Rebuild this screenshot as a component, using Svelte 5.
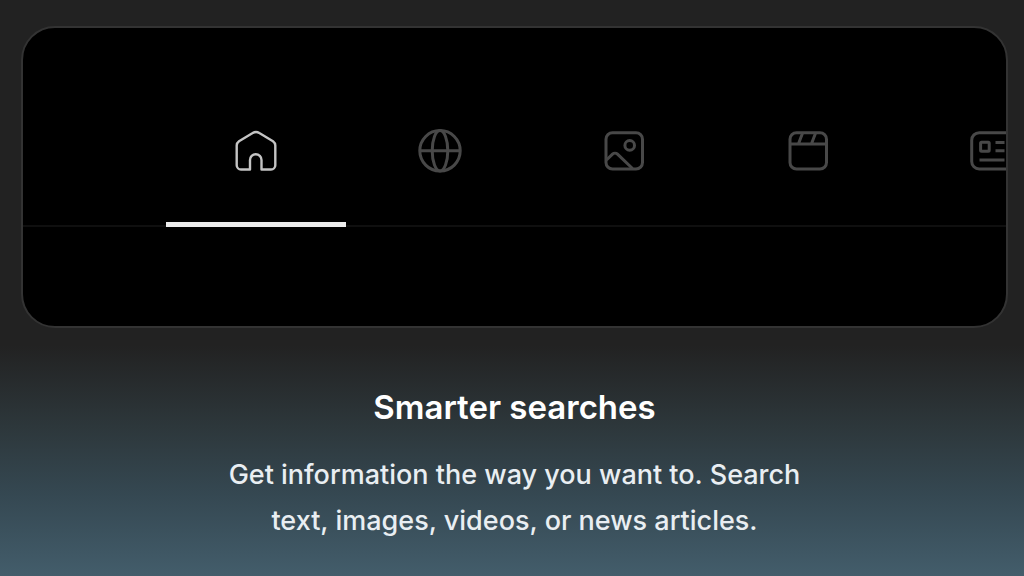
<script>
  let active = $state('home');

  const tabs = [
    { id: 'home', label: 'Home' },
    { id: 'web', label: 'Web' },
    { id: 'images', label: 'Images' },
    { id: 'videos', label: 'Videos' },
    { id: 'news', label: 'News' }
  ];
</script>

<main>
  <section class="card">
    <nav>
      {#each tabs as tab}
        <button
          class:active={active === tab.id}
          aria-label={tab.label}
          onclick={() => (active = tab.id)}
        >
          <svg viewBox="0 0 48 48" aria-hidden="true">
            {#if tab.id === 'home'}
              <path d="M18 42.5H9a4.3 4.3 0 0 1-4.3-4.3V18.6c0-1.8.9-3.4 2.3-4.4L20.7 6a6 6 0 0 1 6.6 0L41 14.2c1.4 1 2.3 2.6 2.3 4.4v19.6a4.3 4.3 0 0 1-4.3 4.3h-9.5V33a5.7 5.7 0 0 0-11.5 0z" />
            {:else if tab.id === 'web'}
              <circle cx="24" cy="23.8" r="20.2" />
              <ellipse cx="24" cy="23.8" rx="7.8" ry="20.2" />
              <path d="M3.8 23.8h40.4" />
            {:else if tab.id === 'images'}
              <rect x="6" y="5.7" width="36.5" height="36.3" rx="6.5" />
              <circle cx="29.7" cy="18.4" r="4.8" />
              <path d="M6.5 33l6-5.8a3.6 3.6 0 0 1 5 0L32.5 41.5" />
            {:else if tab.id === 'videos'}
              <rect x="6" y="5.7" width="36.5" height="36.3" rx="6.5" />
              <path d="M6 17h36.5M18.4 6.5L14.6 16.5M31.4 6.5L27.6 16.5" />
            {:else}
              <rect x="3.7" y="5.7" width="40.6" height="36.3" rx="7.5" />
              <rect x="12.6" y="15.2" width="8.6" height="9" rx="1" />
              <path d="M27.5 15.4h9M27.5 23.8h9M11.5 33h25" />
            {/if}
          </svg>
        </button>
      {/each}
    </nav>
  </section>

  <section class="copy">
    <h2>Smarter searches</h2>
    <p>Get information the way you want to. Search text, images, videos, or news articles.</p>
  </section>
</main>

<style>
  :global(body) {
    background: #222;
  }

  main {
    box-sizing: border-box;
    min-height: 100vh;
    padding: 26px 16px 32px 21px;
    border-bottom: 1px solid #84939b;
    background: linear-gradient(#222 0%, #222 60%, #2d373b 74%, #354852 86%, #435d6b 100%);
    font-family: Inter, 'Liberation Sans', sans-serif;
  }

  .card {
    box-sizing: border-box;
    padding: 51px 0 99px;
    border: 2px solid #333;
    border-radius: 34px;
    background: #000;
    overflow: hidden;
  }

  nav {
    display: flex;
    gap: 4px;
    padding-left: 143px;
    height: 148px;
    background: linear-gradient(#0f0f0f, #0f0f0f) 0 146px / 100% 2px no-repeat;
  }

  button {
    display: flex;
    flex: none;
    align-items: center;
    justify-content: center;
    width: 180px;
    padding: 0;
    border: 0;
    border-bottom: 5px solid transparent;
    background: none;
    color: #484848;
    cursor: pointer;
  }

  button.active {
    border-color: #ececec;
    color: #c4c4c4;
  }

  svg {
    width: 48px;
    height: 48px;
    fill: none;
    stroke: currentColor;
    stroke-width: 3;
    stroke-linejoin: round;
  }

  .active svg {
    stroke-width: 2.4;
  }

  .copy {
    max-width: 600px;
    margin: 0 auto;
    padding-top: 56px;
    color: #fff;
    text-align: center;
  }

  h2 {
    margin: 0 0 22px;
    font-size: 33px;
    font-weight: 600;
    line-height: 46px;
  }

  p {
    margin: 0;
    color: #e9eef2;
    font-size: 27px;
    font-weight: 500;
    line-height: 46px;
  }
</style>
